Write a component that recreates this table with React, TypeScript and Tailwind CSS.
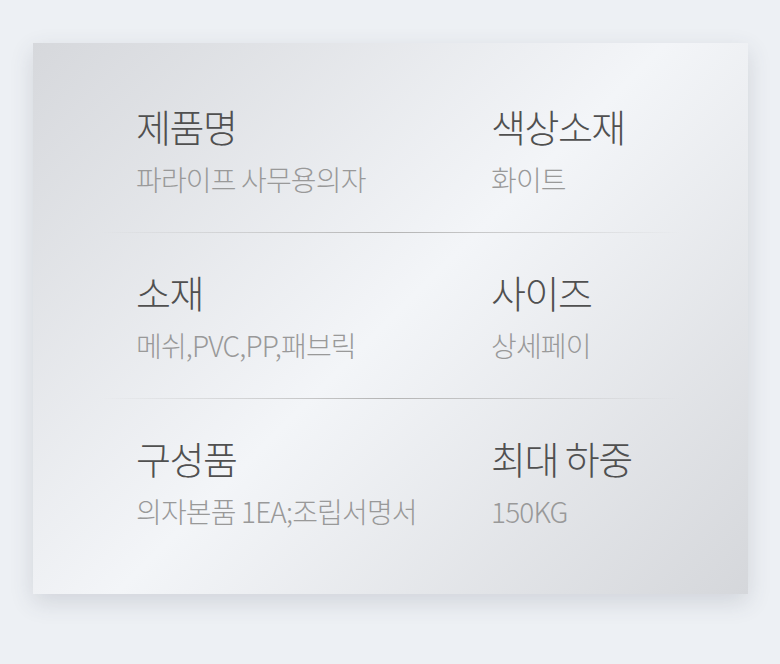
import React from 'react';

const rows = [
  [
    { title: '제품명', value: '파라이프 사무용의자' },
    { title: '색상소재', value: '화이트' },
  ],
  [
    { title: '소재', value: '메쉬,PVC,PP,패브릭' },
    { title: '사이즈', value: '상세페이' },
  ],
  [
    { title: '구성품', value: '의자본품 1EA;조립서명서' },
    { title: '최대 하중', value: '150KG' },
  ],
];

const Spec = ({ title, value }: { title: string; value: string }) => (
  <div>
    <h3 className="text-[38px] font-light leading-[44px] tracking-[-0.04em] text-[#505050]">{title}</h3>
    <p className="mt-[14px] text-[28px] font-light leading-[34px] tracking-[-0.03em] text-[#999]">{value}</p>
  </div>
);

const App = () => {
  return (
    <div
      className="min-h-[664px] w-[780px] bg-[#edf0f4] pt-[43px] pl-[33px]"
      style={{ fontFamily: '"Noto Sans CJK KR", "Noto Sans", sans-serif' }}
    >
      <div className="w-[715px] h-[551px] bg-[linear-gradient(135deg,#d6d8dc_0%,#f3f5f8_50%,#d5d7db_100%)] shadow-[0_8px_22px_rgba(60,70,90,0.16)] pt-6 px-[67px]">
        {rows.map((row, i) => (
          <div key={i}>
            {i > 0 && <div className="h-px bg-gradient-to-r from-transparent via-[#b4b4b4] to-transparent" />}
            <div className="grid h-[165px] grid-cols-[355px_1fr] pt-[37px] pl-9">
              <Spec {...row[0]} />
              <Spec {...row[1]} />
            </div>
          </div>
        ))}
      </div>
    </div>
  );
};

export default App;
